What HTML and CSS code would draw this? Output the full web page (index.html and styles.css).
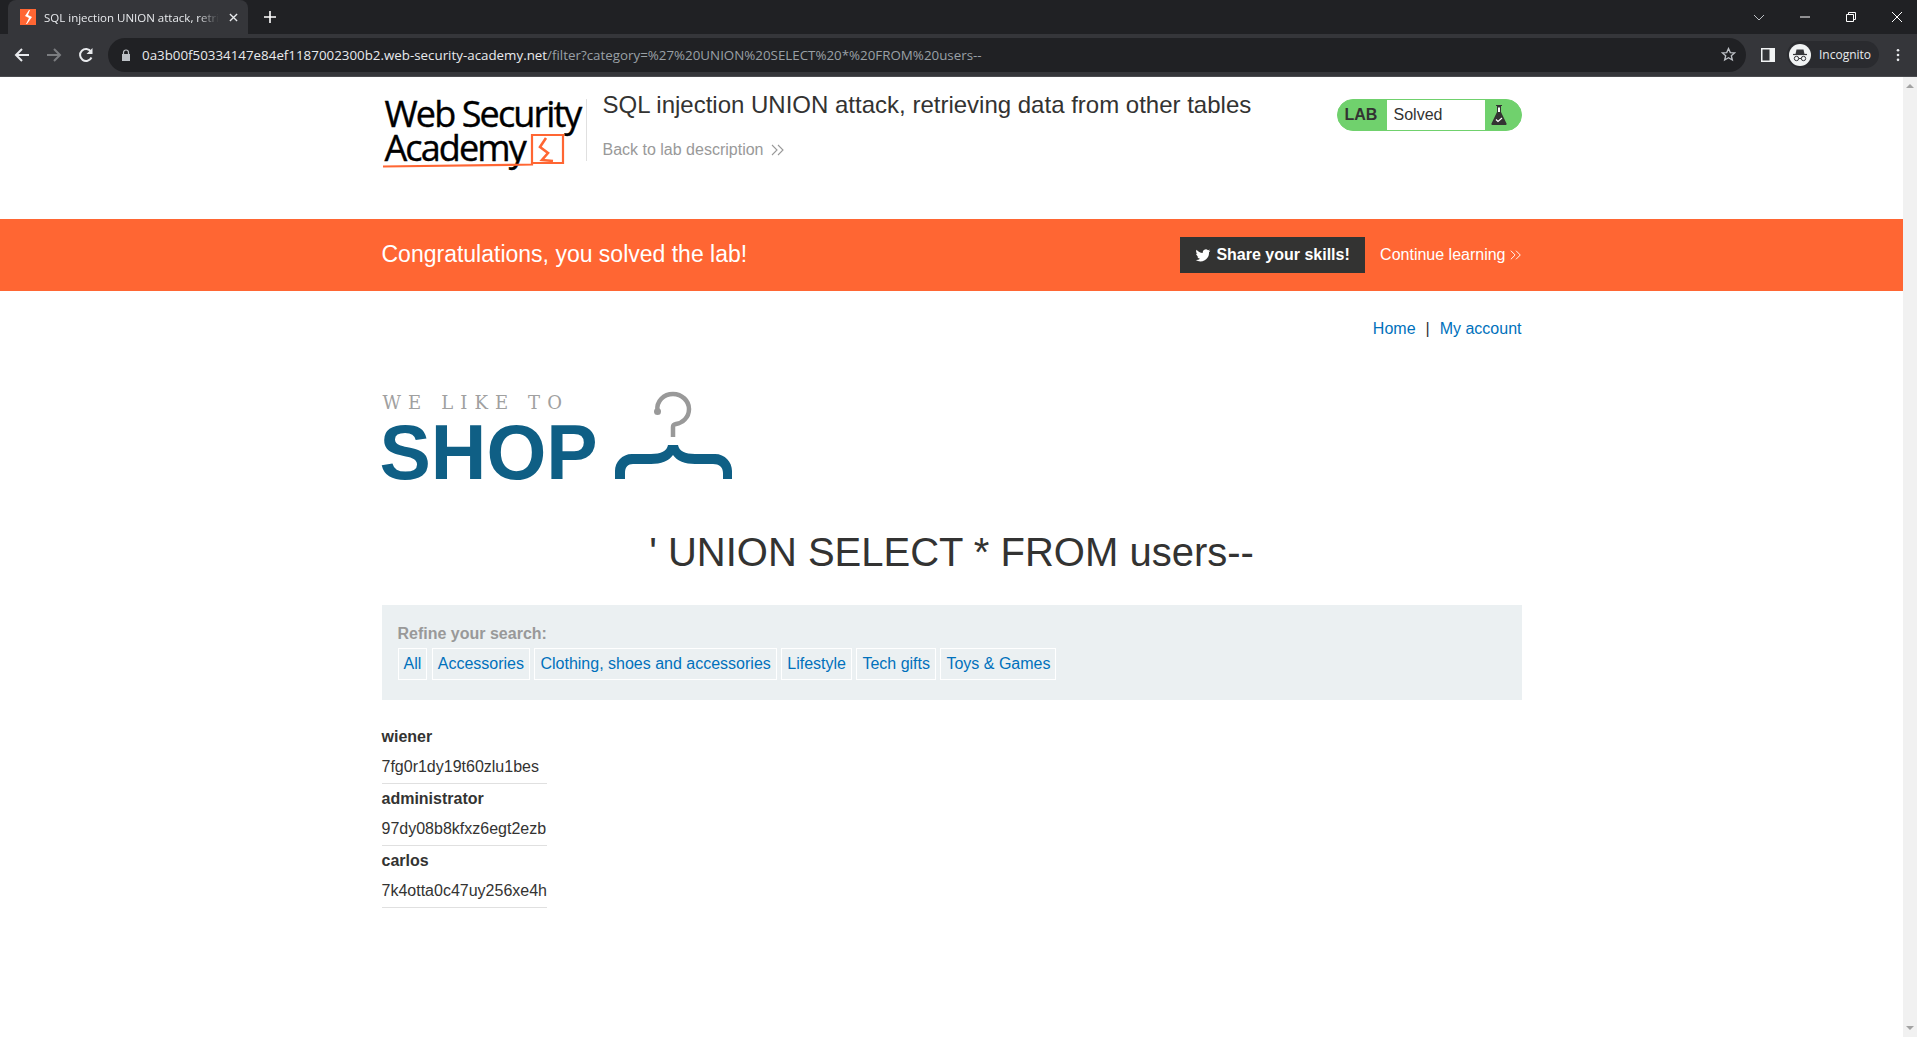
FILE: index.html
```html
<!DOCTYPE html>
<html lang="en">
<head>
    <meta charset="UTF-8">
    <meta name="viewport" content="width=device-width, initial-scale=1.0">
    <title>SQL injection UNION attack, retrieving data from other tables</title>
    <link rel="stylesheet" href="styles.css">
</head>
<body>

    <div class="tabstrip">
        <div class="tab">
            <svg class="favicon" viewBox="0 0 16 16"><rect width="16" height="16" fill="#ff6633"/><path d="M9 1 5 7l4 2-3 6 1 0 5-7-4-2 2-5z" fill="#fff"/></svg>
            <span class="tab-title">SQL injection UNION attack, retri</span>
            <svg class="tab-close" viewBox="0 0 10 10"><path d="M1 1l8 8M9 1l-8 8" stroke="#e8eaed" stroke-width="1.5"/></svg>
        </div>
        <svg class="new-tab" viewBox="0 0 12 12"><path d="M6 0v12M0 6h12" stroke="#fff" stroke-width="1.6"/></svg>
        <div class="window-controls">
            <svg viewBox="0 0 12 12"><path d="M1 4l5 5 5-5" fill="none" stroke="#bdc1c6"/></svg>
            <svg viewBox="0 0 12 12"><path d="M1 6h10" stroke="#fff"/></svg>
            <svg viewBox="0 0 12 12"><path d="M1.500 3.500h7v7h-7zM3.500 3.500v-2h7v7h-2" fill="none" stroke="#fff"/></svg>
            <svg viewBox="0 0 12 12"><path d="M1 1l10 10M11 1L1 11" stroke="#fff"/></svg>
        </div>
    </div>

    <div class="toolbar">
        <svg class="nav-icon" viewBox="0 0 16 16"><path d="M15 8H2M8 2 2 8l6 6" fill="none" stroke="#e8eaed" stroke-width="2"/></svg>
        <svg class="nav-icon" viewBox="0 0 16 16"><path d="M1 8h13M8 2l6 6-6 6" fill="none" stroke="#7b7d80" stroke-width="2"/></svg>
        <svg class="nav-icon" viewBox="0 0 16 16"><path d="M13.500 10.500A6 6 0 1 1 13 4.500" fill="none" stroke="#e8eaed" stroke-width="2"/><path d="M14.500 1v6h-6z" fill="#e8eaed"/></svg>
        <div class="urlbar">
            <svg class="lock" viewBox="0 0 10 12"><path d="M2.500 5V3.500a2.500 2.500 0 0 1 5 0V5" fill="none" stroke="#bdc1c6" stroke-width="1.200"/><path d="M1 5h8v7H1z" fill="#bdc1c6"/></svg>
            <span class="url-host">0a3b00f50334147e84ef1187002300b2.web-security-academy.net</span><span class="url-path">/filter?category=%27%20UNION%20SELECT%20*%20FROM%20users--</span>
            <svg class="star" viewBox="0 0 16 16"><path d="M8 1.600l1.900 4.300 4.600.4-3.500 3 1.100 4.600L8 11.500l-4.100 2.400L5 9.300l-3.500-3 4.600-.4z" fill="none" stroke="#bdc1c6" stroke-width="1.400"/></svg>
        </div>
        <svg class="panel-icon" viewBox="0 0 14 14"><path d="M0 0h14v14H0z" fill="#f1f3f4"/><path d="M1.500 1.500h7v11h-7z" fill="#35363a"/></svg>
        <div class="incognito">
            <svg class="incognito-icon" viewBox="0 0 22 22"><circle cx="11" cy="11" r="11" fill="#f1f3f4"/><path d="M7.500 5.500h7l1 4.500h-9z" fill="#35363a"/><path d="M4 10.500h14" stroke="#35363a" stroke-width="1.200"/><circle cx="7.500" cy="14.500" r="2.200" fill="none" stroke="#35363a"/><circle cx="14.500" cy="14.500" r="2.200" fill="none" stroke="#35363a"/><path d="M9.700 14.500h2.600" stroke="#35363a"/></svg>
            <span>Incognito</span>
        </div>
        <svg class="menu-dots" viewBox="0 0 4 16"><circle cx="2" cy="2.500" r="1.500" fill="#e8eaed"/><circle cx="2" cy="8" r="1.500" fill="#e8eaed"/><circle cx="2" cy="13.500" r="1.500" fill="#e8eaed"/></svg>
    </div>

    <div class="viewport">
        <div class="page">
            <div class="academy-header">
                <div class="container academy-row">
                    <div class="academy-logo">
                        <div class="logo-web">Web Security</div>
                        <div class="logo-academy">Academy</div>
                        <svg class="logo-mark" viewBox="0 0 184 36"><path d="M1 33.500 150 31.500V2h31v28h-30" fill="none" stroke="#ff6633" stroke-width="2.200"/><path d="M164 5l-6 9 8 6-6 7 11 1" fill="none" stroke="#ff6633" stroke-width="2.600"/></svg>
                    </div>
                    <div class="lab-title">
                        <h2>SQL injection UNION attack, retrieving data from other tables</h2>
                        <a class="back-link" href="#">Back to lab description
                            <svg class="chevrons" viewBox="0 0 14 12"><path d="M1 1l5 5-5 5M7 1l5 5-5 5" fill="none" stroke="#999" stroke-width="1.100"/></svg>
                        </a>
                    </div>
                    <div class="lab-status">
                        <span class="lab-tag">LAB</span>
                        <span class="lab-state">Solved</span>
                        <span class="lab-flask">
                            <svg viewBox="0 0 16 20"><path d="M5 .5h6" stroke="#333332"/><path d="M6 1h4v6l5.500 11.500a1 1 0 0 1-1 1.500h-13a1 1 0 0 1-1-1.500L6 7z" fill="#333332"/><path d="M7 2.500h2V7H7z" fill="#fff"/><path d="M5 14.500l2 2 4-3.500" fill="none" stroke="#fff" stroke-width="1.200"/></svg>
                        </span>
                    </div>
                </div>
            </div>

            <div class="solved-banner">
                <div class="container banner-row">
                    <h4>Congratulations, you solved the lab!</h4>
                    <a class="share-btn" href="#">
                        <svg viewBox="0 0 24 24"><path d="M23 5.500c-.8.400-1.700.600-2.600.700.900-.600 1.700-1.400 2-2.500-.900.500-1.900.900-2.900 1.100a4.600 4.600 0 0 0-7.800 4.200C7.900 8.800 4.500 7 2.300 4.200c-1.200 2.100-.600 4.800 1.400 6.100-.7 0-1.400-.2-2-.6 0 2.200 1.500 4.100 3.700 4.600-.7.200-1.400.2-2.100.1.600 1.900 2.300 3.200 4.300 3.200A9.300 9.300 0 0 1 1 19.500a13 13 0 0 0 20-11.700c.8-.6 1.500-1.400 2-2.300z" fill="#fff"/></svg>
                        Share your skills!
                    </a>
                    <a class="continue-link" href="#">Continue learning
                        <svg class="chevrons" viewBox="0 0 14 12"><path d="M1 1l5 5-5 5M7 1l5 5-5 5" fill="none" stroke="#fff" stroke-width="1.100"/></svg>
                    </a>
                </div>
            </div>

            <div class="container">
                <div class="top-links">
                    <a href="#">Home</a><span class="sep">|</span><a href="#">My account</a>
                </div>

                <div class="shop-logo">
                    <div class="shop-text">
                        <div class="shop-small">WE LIKE TO</div>
                        <div class="shop-big">SHOP</div>
                    </div>
                    <svg class="hanger" viewBox="0 0 130 95">
                        <path d="M47.500 22C46 12 54 5 63 5c9 0 16 7 16 15 0 9-7 14-13 15-2.500.500-3 1-3 3v10" fill="none" stroke="#999" stroke-width="4.500"/>
                        <circle cx="47.500" cy="22.500" r="3.500" fill="#999"/>
                        <path d="M58 56h10c1 6 7 9 17 9h20c10 0 17 8 17 17v8h-9v-6c0-6-4-9-10-9H85c-10 0-18-3-22-9-4 6-12 9-22 9H23c-5 0-8 3-8 9v6H5v-8c0-9 7-17 17-17h19c10 0 16-3 17-9z" fill="#0f5f85"/>
                    </svg>
                </div>

                <h1 class="search-title">' UNION SELECT * FROM users--</h1>

                <section class="filters">
                    <p>Refine your search:</p>
                    <a href="#">All</a>
                    <a href="#">Accessories</a>
                    <a href="#">Clothing, shoes and accessories</a>
                    <a href="#">Lifestyle</a>
                    <a href="#">Tech gifts</a>
                    <a href="#">Toys &amp; Games</a>
                </section>

                <table class="results">
                    <tr><th>wiener</th></tr>
                    <tr><td>7fg0r1dy19t60zlu1bes</td></tr>
                    <tr><th>administrator</th></tr>
                    <tr><td>97dy08b8kfxz6egt2ezb</td></tr>
                    <tr><th>carlos</th></tr>
                    <tr><td>7k4otta0c47uy256xe4h</td></tr>
                </table>
            </div>
        </div>
        <div class="scrollbar"><span class="scroll-up"></span><span class="scroll-down"></span></div>
    </div>

</body>
</html>
```

FILE: styles.css
```css
* { box-sizing: border-box; }
html, body { height: 100%; }
body { margin: 0; font-family: "Liberation Sans", Arial, sans-serif; color: #333332; font-size: 16px; overflow: hidden; display: flex; flex-direction: column; }
a { color: #0071bc; text-decoration: none; }

/* browser chrome */
.tabstrip { height: 34px; background: #202124; display: flex; align-items: center; padding-left: 8px; flex: none; }
.tab { width: 240px; height: 34px; background: #35363a; border-radius: 8px 8px 0 0; display: flex; align-items: center; padding: 0 12px; color: #e8eaed; font-family: "Open Sans", sans-serif; font-size: 11.500px; }
.favicon { width: 16px; height: 16px; flex: none; margin-right: 8px; }
.tab-title { flex: 1; white-space: nowrap; -webkit-mask-image: linear-gradient(90deg, #000 88%, transparent 100%); mask-image: linear-gradient(90deg, #000 88%, transparent 100%); }
.tab-close { width: 9px; height: 9px; flex: none; margin-left: 10px; }
.new-tab { width: 12px; height: 12px; margin-left: 16px; }
.window-controls { margin-left: auto; display: flex; gap: 34px; padding-right: 14px; }
.window-controls svg { width: 12px; height: 12px; }
.toolbar { height: 43px; background: #35363a; border-bottom: 1px solid #4a4b4f; display: flex; align-items: center; flex: none; padding: 0 0 1px 14px; }
.nav-icon { width: 16px; height: 16px; margin-right: 16px; flex: none; }
.urlbar { width: 1638px; height: 34px; margin-left: -2px; background: #202124; border-radius: 17px; display: flex; align-items: center; padding-left: 13px; font-family: "Open Sans", sans-serif; font-size: 13.350px; white-space: nowrap; }
.lock { width: 10px; height: 12px; margin-right: 11px; flex: none; }
.url-host { color: #e8eaed; }
.url-path { color: #9aa0a6; }
.star { width: 15px; height: 15px; margin-left: auto; margin-right: 10px; flex: none; }
.panel-icon { width: 14px; height: 14px; margin-left: 15px; flex: none; }
.incognito { width: 92px; height: 27px; margin-left: 12px; border-radius: 14px; background: #2a2b2f; display: flex; align-items: center; padding-left: 2px; color: #e8eaed; font-family: "Open Sans", sans-serif; font-size: 12px; gap: 8px; flex: none; }
.incognito-icon { width: 22px; height: 22px; }
.menu-dots { width: 4px; height: 14px; margin-left: 17px; flex: none; }

/* page */
.viewport { flex: 1; display: flex; min-height: 0; }
.page { flex: 1; min-width: 0; background: #fff; }
.scrollbar { width: 14px; background: #f1f1f1; position: relative; }
.scroll-up { position: absolute; top: 7px; left: 3px; border: 4px solid transparent; border-top: 0; border-bottom: 4px solid #a3a3a3; }
.scroll-down { position: absolute; bottom: 7px; left: 3px; border: 4px solid transparent; border-bottom: 0; border-top: 4px solid #a3a3a3; }
.container { width: 1140px; margin: 0 auto; }

.academy-header { height: 142px; }
.academy-row { display: flex; align-items: flex-start; padding-top: 22px; }
.academy-logo { width: 205px; height: 62px; border-right: 1px solid #e0e0e0; position: relative; flex: none; color: #000; font-family: "Open Sans", sans-serif; font-size: 36px; letter-spacing: -1.900px; line-height: 34px; -webkit-text-stroke: .4px #000; }
.logo-web { margin-left: 3px; margin-top: -2px; white-space: nowrap; }
.logo-academy { margin-left: 3px; }
.logo-mark { position: absolute; left: 0; top: 34px; width: 184px; height: 36px; }
.lab-title { margin-left: 16px; flex: 1; }
.lab-title h2 { margin: -8px 0 0; font-size: 24px; font-weight: normal; line-height: 28px; }
.back-link { display: inline-flex; align-items: center; color: #999; margin-top: 22px; line-height: 18px; }
.chevrons { width: 14px; height: 12px; margin-left: 8px; }
.lab-status { width: 185px; height: 32px; border-radius: 16px; background: #70d16d; display: flex; align-items: stretch; flex: none; border: 1px solid #70d16d; line-height: 29px; }
.lab-tag { width: 49px; padding-left: 7px; font-weight: bold; }
.lab-state { width: 98px; background: #fff; padding-left: 7px; }
.lab-flask { flex: 1; display: flex; align-items: center; padding-left: 6px; }
.lab-flask svg { width: 16px; height: 20px; }

.solved-banner { height: 72px; background: #ff6633; color: #fff; }
.banner-row { display: flex; align-items: center; height: 100%; }
.banner-row h4 { margin: -1px auto 0 0; font-size: 23px; font-weight: normal; }
.share-btn { height: 36px; width: 185px; background: #333332; color: #fff; font-weight: bold; display: flex; align-items: center; justify-content: center; gap: 5px; }
.share-btn svg { width: 16px; height: 16px; }
.continue-link { color: #fff; margin-left: 15px; display: flex; align-items: center; }
.continue-link .chevrons { width: 12px; margin-left: 4px; }

.top-links { text-align: right; padding-top: 29px; line-height: 18px; }
.sep { margin: 0 10px; color: #333332; }

.shop-logo { display: flex; align-items: flex-end; margin-top: 56px; height: 87px; }
.shop-text { width: 228px; flex: none; }
.shop-small { font-family: "DejaVu Serif", serif; font-size: 18px; letter-spacing: 7.100px; color: #a0a0a0; line-height: 16px; white-space: nowrap; margin-left: 1px; }
.shop-big { font-size: 77px; font-weight: bold; color: #0f5f85; line-height: 58px; margin-top: 12px; margin-left: -2px; }
.hanger { width: 130px; height: 95px; flex: none; margin-bottom: -3px; }

.search-title { margin: 47px 0 0; font-size: 40px; font-weight: normal; text-align: center; line-height: 48px; }

.filters { margin-top: 29px; height: 95px; background: #ebf0f2; padding: 15px 16px 0; }
.filters p { margin: 0 0 1px; color: #999; font-weight: bold; line-height: 27px; }
.filters a { display: inline-block; height: 32px; line-height: 30px; padding: 0 5px; border: 1px solid #fff; }

.results { margin-top: 21px; border-collapse: collapse; }
.results th { text-align: left; height: 31px; padding: 0; }
.results td { height: 31px; padding: 0; border-bottom: 1px solid #e0e0e0; }
```
